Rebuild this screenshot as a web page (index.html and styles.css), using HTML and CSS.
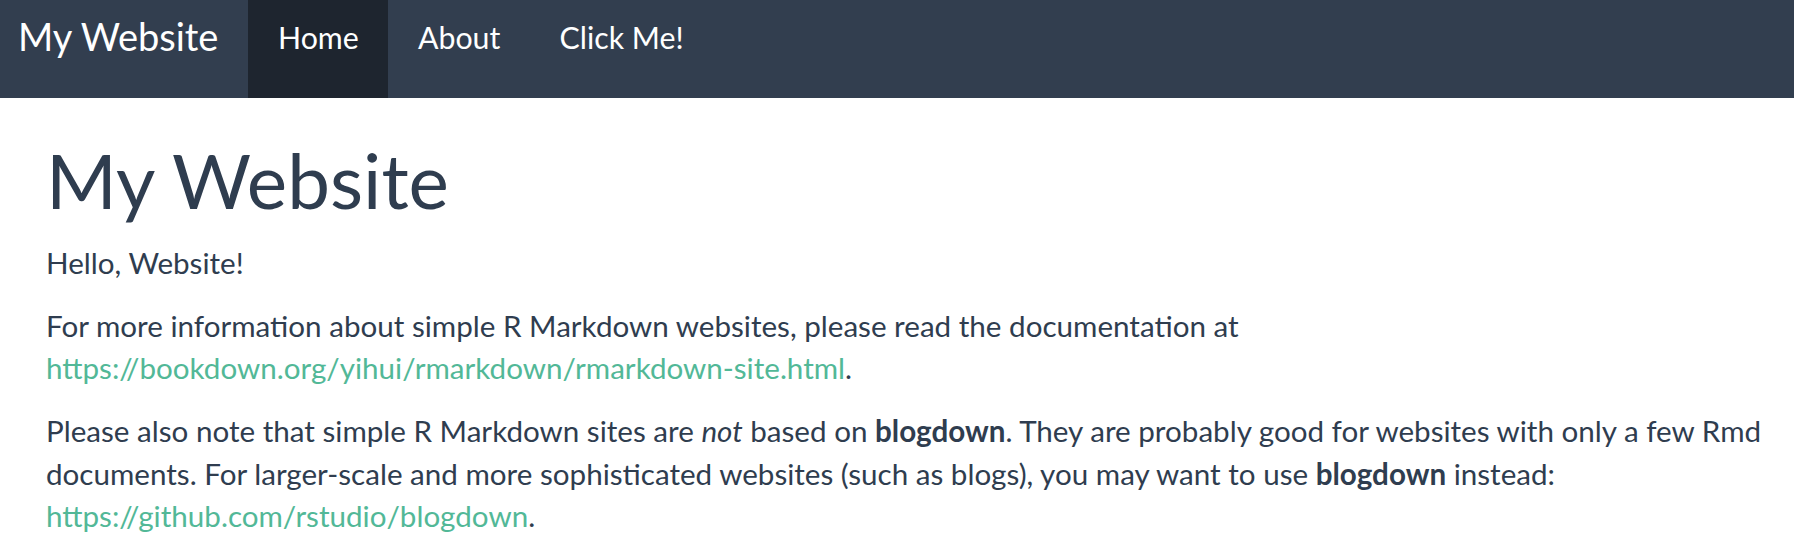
FILE: index.html
```html
<!DOCTYPE html>
<html lang="en">
<head>
<meta charset="utf-8">
<title>My Website</title>
<link rel="stylesheet" href="styles.css">
</head>
<body>
<nav class="navbar">
  <a class="brand" href="#">My Website</a>
  <ul class="nav">
    <li><a class="nav-link active" href="#">Home</a></li>
    <li><a class="nav-link" href="#">About</a></li>
    <li><a class="nav-link" href="#">Click Me!</a></li>
  </ul>
</nav>
<main class="main">
  <h1 class="title">My Website</h1>
  <p>Hello, Website!</p>
  <p>For more information about simple R Markdown websites, please read the documentation at <a href="#">https://bookdown.org/yihui/rmarkdown/rmarkdown-site.html</a>.</p>
  <p>Please also note that simple R Markdown sites are <em>not</em> based on <strong>blogdown</strong>. They are probably good for websites with only a few Rmd documents. For larger-scale and more sophisticated websites (such as blogs), you may want to use <strong>blogdown</strong> instead: <a href="#">https://github.com/rstudio/blogdown</a>.</p>
</main>
</body>
</html>
```

FILE: styles.css
```css
html, body {
  margin: 0;
  padding: 0;
  background: #ffffff;
}

body {
  font-family: Lato, "Open Sans", "Liberation Sans", sans-serif;
  color: #2f3d4f;
  font-size: 29.6px;
  line-height: 42.3px;
}

.navbar {
  display: flex;
  align-items: stretch;
  height: 98px;
  background: #323e4f;
}

.brand {
  display: block;
  padding: 16px 30px 0 18px;
  font-size: 38px;
  line-height: 41px;
  color: #ffffff;
  text-decoration: none;
}

.nav {
  display: flex;
  margin: 0;
  padding: 0;
  list-style: none;
}

.nav li {
  display: flex;
}

.nav-link {
  display: block;
  padding: 17px 29.6px 0 29.6px;
  font-size: 30.3px;
  line-height: 41px;
  color: #ffffff;
  text-decoration: none;
}

.nav-link.active {
  background: #1e252f;
}

.main {
  padding: 0 20px 0 46px;
}

.title {
  margin: 40px 0 20px 0;
  font-size: 76.4px;
  font-weight: 400;
  line-height: 1.1;
  color: #2f3d4f;
}

p {
  margin: 0 0 20.7px 0;
}

a {
  color: #52b897;
  text-decoration: none;
}

strong {
  font-weight: 700;
}
```
